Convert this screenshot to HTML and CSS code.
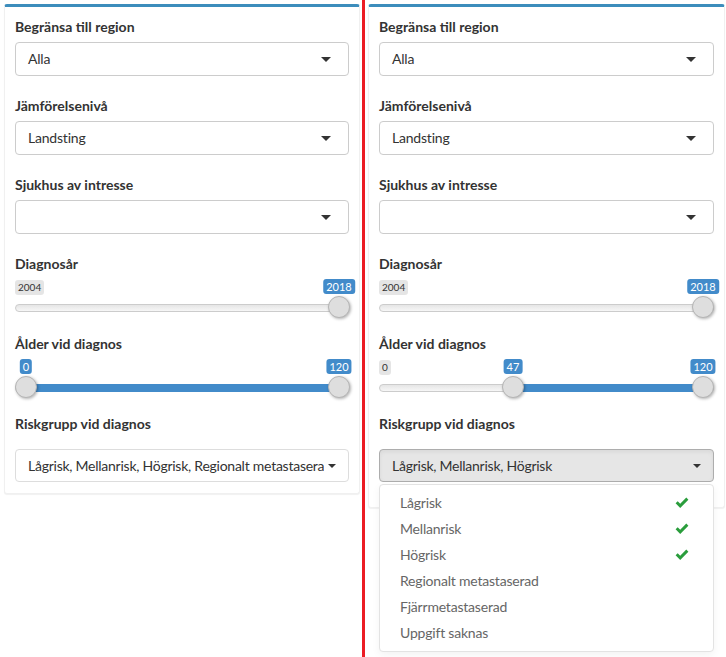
FILE: index.html
```html
<!DOCTYPE html>
<html lang="sv">
<head>
<meta charset="utf-8">
<title>Filter</title>
<link rel="stylesheet" href="styles.css">
</head>
<body>
<div class="page">
  <div class="box">
    <div class="group">
      <label class="lbl">Begränsa till region</label>
      <div class="select"><span class="val">Alla</span><span class="caret"></span></div>
    </div>
    <div class="group">
      <label class="lbl">Jämförelsenivå</label>
      <div class="select"><span class="val">Landsting</span><span class="caret"></span></div>
    </div>
    <div class="group">
      <label class="lbl">Sjukhus av intresse</label>
      <div class="select"><span class="val"></span><span class="caret"></span></div>
    </div>
    <div class="group group-slider">
      <label class="lbl">Diagnosår</label>
      <div class="irs">
        <span class="irs-line"></span>
        <span class="irs-min">2004</span>
        <span class="irs-tag" style="left: 324px">2018</span>
        <span class="irs-handle" style="left: 313px"></span>
      </div>
    </div>
    <div class="group group-slider">
      <label class="lbl">Ålder vid diagnos</label>
      <div class="irs">
        <span class="irs-line"></span>
        <span class="irs-bar" style="left: 11px; width: 313px"></span>
        <span class="irs-tag" style="left: 11px">0</span>
        <span class="irs-tag" style="left: 324px">120</span>
        <span class="irs-handle" style="left: 0px"></span>
        <span class="irs-handle" style="left: 313px"></span>
      </div>
    </div>
    <div class="group group-last">
      <label class="lbl lbl-spaced">Riskgrupp vid diagnos</label>
      <div class="bsel">
        <span class="bsel-text">Lågrisk, Mellanrisk, Högrisk, Regionalt metastaserad</span><span class="caret caret-sm"></span>
      </div>
    </div>
  </div>

  <div class="divider"></div>

  <div class="box box-right">
    <div class="group">
      <label class="lbl">Begränsa till region</label>
      <div class="select"><span class="val">Alla</span><span class="caret"></span></div>
    </div>
    <div class="group">
      <label class="lbl">Jämförelsenivå</label>
      <div class="select"><span class="val">Landsting</span><span class="caret"></span></div>
    </div>
    <div class="group">
      <label class="lbl">Sjukhus av intresse</label>
      <div class="select"><span class="val"></span><span class="caret"></span></div>
    </div>
    <div class="group group-slider">
      <label class="lbl">Diagnosår</label>
      <div class="irs">
        <span class="irs-line"></span>
        <span class="irs-min">2004</span>
        <span class="irs-tag" style="left: 324px">2018</span>
        <span class="irs-handle" style="left: 313px"></span>
      </div>
    </div>
    <div class="group group-slider">
      <label class="lbl">Ålder vid diagnos</label>
      <div class="irs">
        <span class="irs-line"></span>
        <span class="irs-bar" style="left: 134px; width: 190px"></span>
        <span class="irs-min">0</span>
        <span class="irs-tag" style="left: 134px">47</span>
        <span class="irs-tag" style="left: 324px">120</span>
        <span class="irs-handle" style="left: 123px"></span>
        <span class="irs-handle" style="left: 313px"></span>
      </div>
    </div>
    <div class="group group-last">
      <label class="lbl lbl-spaced">Riskgrupp vid diagnos</label>
      <div class="bsel-wrap">
        <div class="bsel bsel-open">
          <span class="bsel-text">Lågrisk, Mellanrisk, Högrisk</span><span class="caret caret-sm"></span>
        </div>
        <ul class="menu">
          <li class="item"><span>Lågrisk</span><svg class="check" viewBox="0 0 14 12" width="14" height="12"><path d="M0.6 6.2 L2.7 4.2 L5.2 6.7 L11.3 0.6 L13.4 2.7 L5.2 10.9 Z"/></svg></li>
          <li class="item"><span>Mellanrisk</span><svg class="check" viewBox="0 0 14 12" width="14" height="12"><path d="M0.6 6.2 L2.7 4.2 L5.2 6.7 L11.3 0.6 L13.4 2.7 L5.2 10.9 Z"/></svg></li>
          <li class="item"><span>Högrisk</span><svg class="check" viewBox="0 0 14 12" width="14" height="12"><path d="M0.6 6.2 L2.7 4.2 L5.2 6.7 L11.3 0.6 L13.4 2.7 L5.2 10.9 Z"/></svg></li>
          <li class="item"><span>Regionalt metastaserad</span></li>
          <li class="item"><span>Fjärrmetastaserad</span></li>
          <li class="item"><span>Uppgift saknas</span></li>
        </ul>
      </div>
    </div>
  </div>
</div>
</body>
</html>
```

FILE: styles.css
```css
* { box-sizing: border-box; }

html, body {
  margin: 0;
  padding: 0;
  background: #fff;
}

body {
  font-family: "Lato", "Liberation Sans", sans-serif;
  font-size: 14px;
  line-height: 20px;
  color: #333;
}

.page {
  display: flex;
  align-items: flex-start;
  height: 657px;
  padding-left: 4px;
  overflow: hidden;
}

.box {
  width: 356px;
  margin-top: 4px;
  background: #fff;
  border: 1px solid #f0f0f0;
  border-top: 3px solid #3c8dbc;
  border-radius: 3px;
  padding: 10px 10px 11px 10px;
  box-shadow: 0 1px 1px rgba(0, 0, 0, 0.06);
}

.box-right {
  width: 357px;
  padding-bottom: 25px;
}

.divider {
  align-self: stretch;
  width: 3px;
  margin: 0 3px 0 2px;
  background: #ec1c24;
}

.group {
  margin-bottom: 20px;
}

.group-slider {
  margin-bottom: 15px;
}

.group-last {
  margin-bottom: 0;
}

.lbl {
  display: block;
  font-weight: 700;
  font-size: 14px;
  line-height: 20px;
  color: #333;
  margin-bottom: 5px;
}

.lbl-spaced {
  margin-bottom: 15px;
}

.select {
  display: flex;
  align-items: center;
  height: 34px;
  border: 1px solid #ccc;
  border-radius: 4px;
  padding: 0 17px 0 12px;
  color: #333;
  background: #fff;
}

.val {
  flex: 1;
  letter-spacing: -0.2px;
}

.caret {
  width: 0;
  height: 0;
  border-left: 5px solid transparent;
  border-right: 5px solid transparent;
  border-top: 5px solid #333;
}

.caret-sm {
  border-left-width: 4px;
  border-right-width: 4px;
  border-top-width: 4px;
  flex: none;
}

/* slider */
.irs {
  position: relative;
  height: 40px;
}

.irs-line {
  position: absolute;
  left: 0;
  right: 0;
  top: 25px;
  height: 8px;
  border: 1px solid #ccc;
  border-radius: 16px;
  background: linear-gradient(to bottom, #dddddd -50%, #ffffff 150%);
}

.irs-bar {
  position: absolute;
  top: 25px;
  height: 8px;
  background: #428bca;
}

.irs-min {
  position: absolute;
  left: 0;
  top: 1px;
  font-size: 10px;
  line-height: 13px;
  padding: 1px 3px;
  color: #333;
  background: rgba(0, 0, 0, 0.1);
  border-radius: 3px;
}

.irs-tag {
  position: absolute;
  top: 0;
  transform: translateX(-50%);
  font-size: 11px;
  line-height: 13px;
  padding: 1px 3px;
  color: #fff;
  background: #428bca;
  border-radius: 3px;
  font-weight: 400;
}

.irs-handle {
  position: absolute;
  top: 17px;
  width: 22px;
  height: 22px;
  background: #dedede;
  border: 1px solid #b5b5b5;
  border-radius: 50%;
  box-shadow: 1px 1px 3px rgba(0, 0, 0, 0.3);
}

/* bootstrap-select */
.bsel-wrap {
  position: relative;
}

.bsel {
  display: flex;
  align-items: center;
  height: 33px;
  border: 1px solid #ddd;
  border-radius: 4px;
  padding: 0 12px 0 12px;
  background: #fff;
  color: #333;
}

.bsel-text {
  flex: 1;
  min-width: 0;
  white-space: nowrap;
  overflow: hidden;
  margin-right: 4px;
  letter-spacing: -0.25px;
}

.bsel-open {
  background: #e6e6e6;
  border-color: #adadad;
  box-shadow: inset 0 2px 4px rgba(0, 0, 0, 0.06);
}

.menu {
  position: absolute;
  left: 0;
  right: 0;
  top: 35px;
  margin: 0;
  padding: 5px 0;
  list-style: none;
  background: #fff;
  border: 1px solid #e3e3e3;
  border-radius: 4px;
  box-shadow: 0 3px 8px rgba(0, 0, 0, 0.05);
}

.item {
  display: flex;
  align-items: center;
  justify-content: space-between;
  height: 26px;
  padding: 0 24px 0 20px;
  color: #666;
  letter-spacing: -0.2px;
}

.check {
  fill: #2a9d3c;
}
```
